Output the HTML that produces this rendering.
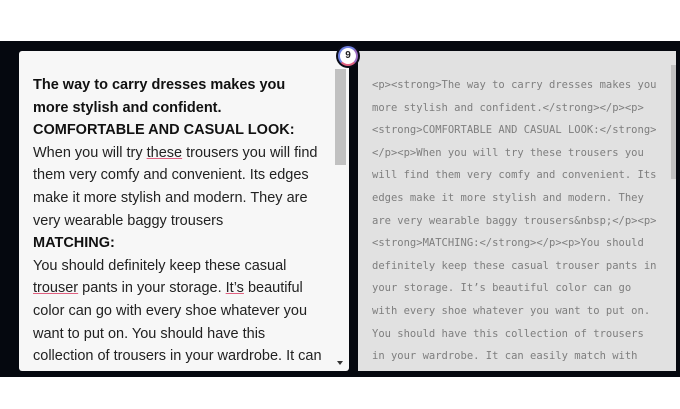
<!DOCTYPE html>
<html><head><style>
*{margin:0;padding:0;box-sizing:border-box}
body{width:680px;height:409px;background:#fff;position:relative;overflow:hidden;font-family:"Liberation Sans",sans-serif}
.band{position:absolute;left:0;top:41px;width:680px;height:336px;background:#05080f}
.lp{position:absolute;left:19px;top:51px;width:330px;height:320px;background:#f7f7f7;border-radius:3px;overflow:hidden}
.rp{position:absolute;left:358px;top:51px;width:318px;height:320px;background:#e1e1e1;overflow:hidden}
.lt{position:absolute;left:14px;top:23px;font-size:14.5px;line-height:22.6px;color:#222;white-space:nowrap}
.lt b{color:#111}
.u{text-decoration:underline;text-decoration-color:#e06080}
.rt{position:absolute;left:14px;top:23px;font-family:"DejaVu Sans Mono",monospace;font-size:10.5px;line-height:22.6px;color:#7e7e7e;white-space:nowrap}
.sb{position:absolute;background:#c1c1c1}
.badge{position:absolute;left:336px;top:44px;width:24px;height:24px;border-radius:50%;background:#0a0c18;padding:2px}
.badge div{width:20px;height:20px;border-radius:50%;background:#fff;border:2px solid #9a6bc0;border-left-color:#6c7fe0;border-top-color:#7080e0;border-bottom-color:#e06080;font-size:10px;font-weight:bold;text-align:center;line-height:16px;color:#222}
</style></head><body>
<div class="band"></div>
<div class="lp">
<div class="lt"><b>The way to carry dresses makes you<br>more stylish and confident.<br>COMFORTABLE AND CASUAL LOOK:</b><br>When you will try <span class="u">these</span> trousers you will find<br>them very comfy and convenient. Its edges<br>make it more stylish and modern. They are<br>very wearable baggy trousers<br><b>MATCHING:</b><br>You should definitely keep these casual<br><span class="u">trouser</span> pants in your storage. <span class="u">It’s</span> beautiful<br>color can go with every shoe whatever you<br>want to put on. You should have this<br>collection of trousers in your wardrobe. It can</div>
<div class="sb" style="left:316px;top:18px;width:11px;height:96px"></div>
<div style="position:absolute;left:318px;top:310px;border:3px solid transparent;border-top:4px solid #333"></div>
</div>
<div class="rp">
<div class="rt">&lt;p&gt;&lt;strong&gt;The way to carry dresses makes you<br>more stylish and confident.&lt;/strong&gt;&lt;/p&gt;&lt;p&gt;<br>&lt;strong&gt;COMFORTABLE AND CASUAL LOOK:&lt;/strong&gt;<br>&lt;/p&gt;&lt;p&gt;When you will try these trousers you<br>will find them very comfy and convenient. Its<br>edges make it more stylish and modern. They<br>are very wearable baggy trousers&amp;nbsp;&lt;/p&gt;&lt;p&gt;<br>&lt;strong&gt;MATCHING:&lt;/strong&gt;&lt;/p&gt;&lt;p&gt;You should<br>definitely keep these casual trouser pants in<br>your storage. It’s beautiful color can go<br>with every shoe whatever you want to put on.<br>You should have this collection of trousers<br>in your wardrobe. It can easily match with<br>your flat shoes, high heel, and sandals as</div>
<div class="sb" style="left:313px;top:14px;width:8px;height:114px"></div>
</div>
<div class="badge"><div>9</div></div>
</body></html>
